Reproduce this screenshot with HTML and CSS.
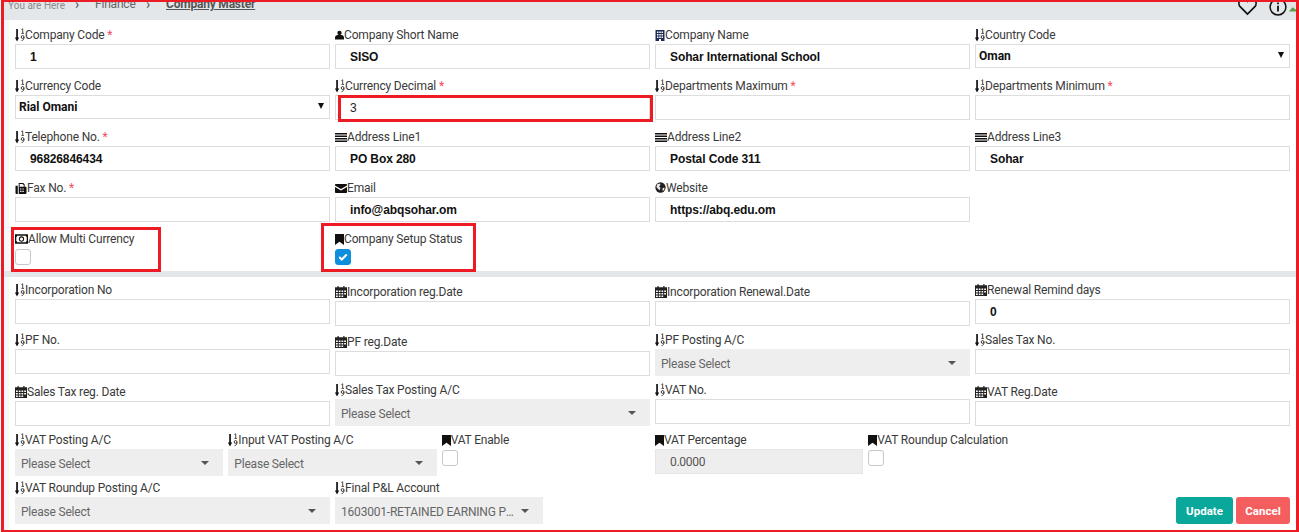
FILE: index.html
```html
<!DOCTYPE html>
<html lang="en">
<head>
<meta charset="utf-8">
<title>Company Master</title>
<link rel="stylesheet" href="styles.css">
</head>
<body>
<svg class="defs" width="0" height="0" aria-hidden="true">
  <symbol id="i-sort" viewBox="0 0 10 14">
    <path d="M1.200 1h1.700v8.500h1.300L2 13.500-.1 9.500h1.300z" fill="#111"/>
    <path d="M6.400 1.500 7.700.8v4.400M6.400 5.400h2.600" fill="none" stroke="#222" stroke-width=".8"/>
    <circle cx="7.600" cy="9" r="1.400" fill="none" stroke="#222" stroke-width=".9"/>
    <path d="M9 9.200c0 2-.8 3.200-2.400 3.400" fill="none" stroke="#222" stroke-width=".9"/>
  </symbol>
  <symbol id="i-user" viewBox="0 0 10 10">
    <circle cx="5" cy="2.800" r="2.400" fill="#111"/>
    <path d="M0 10V8c0-1.800 1.400-3 3-3h4c1.600 0 3 1.200 3 3v2z" fill="#111"/>
  </symbol>
  <symbol id="i-building" viewBox="0 0 9 11">
    <path fill="#1c2a55" fill-rule="evenodd" d="M0 0h9v11H5.500V9h-2v2H0zM1.500 1.500v1.500h1.500V1.500zM3.800 1.500v1.500h1.500V1.500zM6 1.500v1.500h1.500V1.500zM1.500 4v1.500h1.500V4zM3.800 4v1.500h1.500V4zM6 4v1.500h1.500V4zM1.500 6.500V8h1.500V6.500zM3.800 6.500V8h1.500V6.500zM6 6.500V8h1.500V6.500z"/>
  </symbol>
  <symbol id="i-lines" viewBox="0 0 12 10">
    <path d="M0 .5h12v1.500H0zM0 3h12v1.500H0zM0 5.500h12V7H0zM0 8h12v1.500H0z" fill="#111"/>
  </symbol>
  <symbol id="i-fax" viewBox="0 0 12 12">
    <path fill="#111" fill-rule="evenodd" d="M0 3h2.500v9H1c-.6 0-1-.4-1-1zM3.500 0h5l1.500 1.500V4h1c.6 0 1 .4 1 1v6c0 .6-.4 1-1 1H3.500zM4.500 1v3h4.500V2H8V1zM5 6v1.200h1.500V6zM7.500 6v1.200H9V6zM5 8.500v1.200h1.500V8.500zM7.500 8.500v1.200H9V8.500z"/>
  </symbol>
  <symbol id="i-mail" viewBox="0 0 12 9">
    <path d="M1 0h10c.6 0 1 .4 1 1v.4L6 5 0 1.400V1c0-.6.4-1 1-1zM0 3l6 3.600L12 3v5c0 .6-.4 1-1 1H1c-.6 0-1-.4-1-1z" fill="#111"/>
  </symbol>
  <symbol id="i-globe" viewBox="0 0 12 12">
    <circle cx="6" cy="6" r="5.600" fill="#222"/>
    <path d="M2.500 2.500 5 1.500l1 1.500-1.500 2L6 6.500 5 9 3.500 7.500 1.500 5.500zM8 7l2-1 .5 1.500L8.500 10z" fill="#eee"/>
  </symbol>
  <symbol id="i-money" viewBox="0 0 14 10">
    <path fill="#111" fill-rule="evenodd" d="M0 0h14v10H0zM2.500 1.400c0 .6-.5 1.100-1.100 1.100v5c.6 0 1.100.5 1.100 1.100h9c0-.6.5-1.100 1.100-1.100v-5c-.6 0-1.100-.5-1.100-1.100z"/>
    <circle cx="7" cy="5" r="2.300" fill="none" stroke="#111" stroke-width="1.100"/>
  </symbol>
  <symbol id="i-mark" viewBox="0 0 9 11">
    <path d="M0 0h9v11L4.500 7.800 0 11z" fill="#111"/>
  </symbol>
  <symbol id="i-cal" viewBox="0 0 12 12">
    <path fill="#222" fill-rule="evenodd" d="M2.500 0h1.200v1.200h4.600V0h1.200v1.200H12V12H0V1.200h2.500zM1 4.500V6h1.800V4.500zM3.800 4.500V6h1.700V4.500zM6.500 4.500V6h1.700V4.500zM9.200 4.500V6H11V4.500zM1 7v1.500h1.800V7zM3.800 7v1.500h1.700V7zM6.500 7v1.500h1.700V7zM9.200 7v1.500H11V7zM1 9.500V11h1.800V9.500zM3.800 9.500V11h1.700V9.500zM6.500 9.500V11h1.700V9.500z"/>
  </symbol>
</svg>

<div class="frame">
  <header class="crumbs">
    <span class="crumb-here">You are Here</span>
    <span class="crumb-sep">&#8250;</span>
    <span class="crumb-link">Finance</span>
    <span class="crumb-sep">&#8250;</span>
    <span class="crumb-current">Company Master</span>
    <span class="crumb-tools">
      <svg class="tool-heart" viewBox="0 0 20 20"><path d="M10 18 2.500 10.500C.5 8.300.5 5.200 2.500 3.300 4.500 1.500 7.800 1.700 10 4.500c2.200-2.800 5.500-3 7.500-1.200 2 1.900 2 5 0 7.200z" fill="none" stroke="#111" stroke-width="1.800"/></svg>
      <svg class="tool-info" viewBox="0 0 20 20"><circle cx="10" cy="10" r="8.800" fill="none" stroke="#111" stroke-width="1.700"/><path d="M9 8.500h2V15H9zM9 5h2v2H9z" fill="#111"/></svg>
      <svg class="tool-img" viewBox="0 0 8 8"><path d="M0 0h8v8H0z" fill="#dfe6df"/><path d="M0 8 4 3l4 3v2z" fill="#5a9e4b"/></svg>
    </span>
  </header>

  <main class="card">
    <section class="grid top">
      <div class="field w3"><label><svg class="ic sort"><use href="#i-sort"/></svg>Company Code <em>*</em></label><input class="in" value="1"></div>
      <div class="field w3"><label><svg class="ic user"><use href="#i-user"/></svg>Company Short Name</label><input class="in" value="SISO"></div>
      <div class="field w3"><label><svg class="ic bld"><use href="#i-building"/></svg>Company Name</label><input class="in" value="Sohar International School"></div>
      <div class="field w3"><label><svg class="ic sort"><use href="#i-sort"/></svg>Country Code</label><span class="sel-wrap"><select class="sel"><option>Oman</option></select></span></div>

      <div class="field w3"><label><svg class="ic sort"><use href="#i-sort"/></svg>Currency Code</label><span class="sel-wrap"><select class="sel"><option>Rial Omani</option></select></span></div>
      <div class="field w3"><label><svg class="ic sort"><use href="#i-sort"/></svg>Currency Decimal <em>*</em></label><input class="in plain" value="3"></div>
      <div class="field w3"><label><svg class="ic sort"><use href="#i-sort"/></svg>Departments Maximum <em>*</em></label><input class="in"></div>
      <div class="field w3"><label><svg class="ic sort"><use href="#i-sort"/></svg>Departments Minimum <em>*</em></label><input class="in"></div>

      <div class="field w3"><label><svg class="ic sort"><use href="#i-sort"/></svg>Telephone No. <em>*</em></label><input class="in" value="96826846434"></div>
      <div class="field w3"><label><svg class="ic lines"><use href="#i-lines"/></svg>Address Line1</label><input class="in" value="PO Box 280"></div>
      <div class="field w3"><label><svg class="ic lines"><use href="#i-lines"/></svg>Address Line2</label><input class="in" value="Postal Code 311"></div>
      <div class="field w3"><label><svg class="ic lines"><use href="#i-lines"/></svg>Address Line3</label><input class="in" value="Sohar"></div>

      <div class="field w3"><label><svg class="ic lines"><use href="#i-fax"/></svg>Fax No. <em>*</em></label><input class="in"></div>
      <div class="field w3"><label><svg class="ic lines"><use href="#i-mail"/></svg>Email</label><input class="in" value="info@abqsohar.om"></div>
      <div class="field w3"><label><svg class="ic globe"><use href="#i-globe"/></svg>Website</label><input class="in" value="https://abq.edu.om"></div>
      <div class="field w3"></div>

      <div class="field w3 flag"><label><svg class="ic money"><use href="#i-money"/></svg>Allow Multi Currency</label><span class="check"></span></div>
      <div class="field w3 flag"><label><svg class="ic mark"><use href="#i-mark"/></svg>Company Setup Status</label><span class="check on"><svg viewBox="0 0 12 10"><path d="M1.500 5 4.500 8 10.500 2" fill="none" stroke="#fff" stroke-width="2.400"/></svg></span></div>
    </section>

    <hr class="divider">

    <section class="grid bottom">
      <div class="field w3"><label><svg class="ic sort"><use href="#i-sort"/></svg>Incorporation No</label><input class="in"></div>
      <div class="field w3 dated"><label><svg class="ic cal"><use href="#i-cal"/></svg>Incorporation reg.Date</label><input class="in"></div>
      <div class="field w3 dated"><label><svg class="ic cal"><use href="#i-cal"/></svg>Incorporation Renewal.Date</label><input class="in"></div>
      <div class="field w3"><label><svg class="ic cal"><use href="#i-cal"/></svg>Renewal Remind days</label><input class="in" value="0"></div>

      <div class="field w3"><label><svg class="ic sort"><use href="#i-sort"/></svg>PF No.</label><input class="in"></div>
      <div class="field w3 dated"><label><svg class="ic cal"><use href="#i-cal"/></svg>PF reg.Date</label><input class="in"></div>
      <div class="field w3"><label><svg class="ic sort"><use href="#i-sort"/></svg>PF Posting A/C</label><div class="drop"><span>Please Select</span></div></div>
      <div class="field w3"><label><svg class="ic sort"><use href="#i-sort"/></svg>Sales Tax No.</label><input class="in"></div>

      <div class="field w3 dated"><label><svg class="ic cal"><use href="#i-cal"/></svg>Sales Tax reg. Date</label><input class="in"></div>
      <div class="field w3"><label><svg class="ic sort"><use href="#i-sort"/></svg>Sales Tax Posting A/C</label><div class="drop"><span>Please Select</span></div></div>
      <div class="field w3"><label><svg class="ic sort"><use href="#i-sort"/></svg>VAT No.</label><input class="in"></div>
      <div class="field w3 dated"><label><svg class="ic cal"><use href="#i-cal"/></svg>VAT Reg.Date</label><input class="in"></div>

      <div class="field w2"><label><svg class="ic sort"><use href="#i-sort"/></svg>VAT Posting A/C</label><div class="drop"><span>Please Select</span></div></div>
      <div class="field w2"><label><svg class="ic sort"><use href="#i-sort"/></svg>Input VAT Posting A/C</label><div class="drop"><span>Please Select</span></div></div>
      <div class="field w2 flag"><label><svg class="ic mark"><use href="#i-mark"/></svg>VAT Enable</label><span class="check"></span></div>
      <div class="field w2"><label><svg class="ic mark"><use href="#i-mark"/></svg>VAT Percentage</label><input class="in off" value="0.0000" disabled></div>
      <div class="field w2 flag"><label><svg class="ic mark"><use href="#i-mark"/></svg>VAT Roundup Calculation</label><span class="check"></span></div>
      <div class="field w2"></div>

      <div class="field w3"><label><svg class="ic sort"><use href="#i-sort"/></svg>VAT Roundup Posting A/C</label><div class="drop"><span>Please Select</span></div></div>
      <div class="field w2"><label><svg class="ic sort"><use href="#i-sort"/></svg>Final P&amp;L Account</label><div class="drop"><span>1603001-RETAINED EARNING PROFIT</span></div></div>
      <div class="actions"><button class="btn ok">Update</button><button class="btn no">Cancel</button></div>
    </section>

    <div class="mark-box box-decimal"></div>
    <div class="mark-box box-multi"></div>
    <div class="mark-box box-setup"></div>
  </main>
</div>
</body>
</html>
```

FILE: styles.css
```css
* { box-sizing: border-box; }
html, body { margin: 0; height: 100%; background: #fff; }
body { font: 12px/20px Roboto, "Liberation Sans", sans-serif; color: #333; overflow: hidden; }
.defs { position: absolute; }

.frame {
  width: 1298px;
  height: 532px;
  margin-left: 1px;
  border: 3px solid #ed1c24;
  border-top-width: 2px;
  border-bottom-width: 2px;
  background: #f6f7f8;
  display: flex;
  flex-direction: column;
  overflow: hidden;
}

.crumbs {
  height: 18px;
  flex: none;
  background: #e4e7ea;
  padding-left: 4px;
  display: flex;
  align-items: flex-end;
  overflow: hidden;
  line-height: 14px;
  color: #666;
}
.crumb-here { font-size: 10px; color: #8a8a8a; width: 62px; padding-bottom: 7px; }
.crumb-sep { font-size: 14px; width: 25px; color: #555; padding-left: 5px; padding-bottom: 9px; }
.crumb-link { font-size: 12px; width: 46px; padding-bottom: 9px; letter-spacing: -.2px; }
.crumb-current { font-size: 12px; font-weight: 700; text-decoration: underline; color: #555; padding-bottom: 9px; letter-spacing: -.2px; }
.crumb-tools { margin-left: auto; display: flex; align-items: flex-end; }
.tool-heart { width: 19px; height: 19px; margin-bottom: 4px; }
.tool-info { width: 18px; height: 18px; margin: 0 0 4px 12px; }
.tool-img { width: 7px; height: 8px; margin: 0 0 8px 2px; }

.card {
  position: relative;
  flex: 1;
  margin-left: 5px;
  background: #fff;
}

.grid { display: flex; flex-wrap: wrap; width: 1281px; padding-left: 1px; }
.top { padding-top: 4px; }
.bottom { padding-top: 2px; }

.field { padding: 0 0 0 5px; margin-bottom: 6px; }
.bottom .field { margin-bottom: 3px; }
.w3 { width: 320px; }
.w2 { width: 213.33px; }

.field label { display: block; height: 20px; white-space: nowrap; line-height: 22px; color: #3a3a3a; letter-spacing: -.17px; }
.dated label { height: 22px; line-height: 26px; }
.field em { color: #f0505a; font-style: normal; }

.ic { display: inline-block; vertical-align: -2px; margin-right: 0; }
.sort { width: 10px; height: 14px; vertical-align: -3px; }
.user { width: 9px; height: 10px; vertical-align: -1px; }
.bld { width: 10px; height: 11px; vertical-align: -2px; }
.lines { width: 12px; height: 11px; vertical-align: -2px; }
.globe { width: 11px; height: 11px; vertical-align: -1px; }
.money { width: 13px; height: 10px; vertical-align: -1px; }
.mark { width: 9px; height: 11px; vertical-align: -2px; }
.cal { width: 12px; height: 12px; vertical-align: -2px; }

.in {
  display: block;
  width: 100%;
  height: 25px;
  border: 1px solid #ddd;
  background: #fff;
  padding: 0 14px;
  font: 700 12px "Liberation Sans", Arial, sans-serif;
  letter-spacing: -.1px;
  color: #111;
  outline: 0;
  border-radius: 0;
}
.in.plain { font-weight: 400; color: #222; }
.in.off { background: #eee; border-color: #e6e6e6; font-family: Roboto, sans-serif; font-weight: 400; color: #555; letter-spacing: -.3px; }

.sel-wrap { display: block; position: relative; }
.sel-wrap::after {
  content: "";
  position: absolute;
  right: 6px;
  top: 8px;
  border: 3px solid transparent;
  border-top: 6px solid #111;
  border-bottom: 0;
}
.sel {
  display: block;
  width: 100%;
  height: 24px;
  border: 1px solid #ddd;
  background: #fff;
  padding: 0 0 0 3px;
  font: 700 12px Roboto, sans-serif;
  color: #111;
  border-radius: 0;
  outline: 0;
  appearance: none;
}

.drop {
  position: relative;
  height: 27px;
  margin-bottom: -2px;
  background: #eee;
  padding: 0 24px 0 6px;
  line-height: 30px;
  color: #666;
  letter-spacing: -.2px;
}
.drop span { display: block; overflow: hidden; white-space: nowrap; text-overflow: ellipsis; }
.drop::after {
  content: "";
  position: absolute;
  right: 14px;
  top: 12px;
  border: 4px solid transparent;
  border-top-color: #555;
  border-bottom: 0;
}

.check {
  display: block;
  width: 16px;
  height: 16px;
  border: 1px solid #c8c8c8;
  border-radius: 3px;
  background: #fff;
  margin-top: 1px;
}
.check.on { background: #0d8fdb; border-color: #0d8fdb; padding: 2px; display: flex; }
.check.on svg { width: 100%; height: 100%; }

.divider { width: calc(100% + 5px); height: 6px; margin: 0 0 0 -5px; border: 0; background: #e4e7ea; }

.actions { margin-left: auto; display: flex; gap: 3px; padding: 20px 0 0 0; }
.btn {
  height: 27px;
  border: 0;
  border-radius: 3px;
  color: #fff;
  font: 700 11.5px Roboto, sans-serif;
  padding: 0;
}
.ok { width: 57px; background: #0aa89a; }
.no { width: 54px; background: #f55e5e; }

.mark-box { position: absolute; border: 3px solid #ed1c24; }
.box-decimal { left: 329px; top: 75px; width: 315px; height: 27px; }
.box-multi { left: 2px; top: 207px; width: 150px; height: 45px; }
.box-setup { left: 312px; top: 203px; width: 155px; height: 49px; }
```
